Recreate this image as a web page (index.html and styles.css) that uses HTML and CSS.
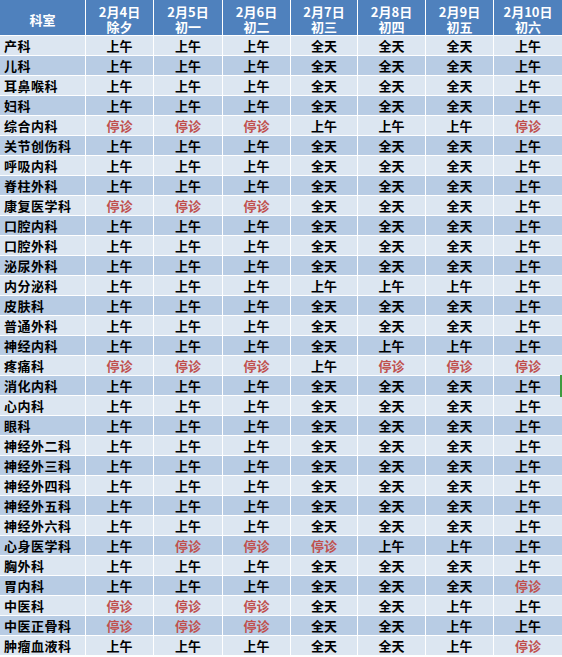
FILE: index.html
```html
<!DOCTYPE html>
<html lang="zh">
<head>
<meta charset="utf-8">
<title>春节门诊安排</title>
<link rel="stylesheet" href="styles.css">
</head>
<body>
<div class="sheet">
  <div class="row head">
    <div class="c name-h">科室</div>
    <div class="c"><span class="l">2月4日</span><span class="l">除夕</span></div>
    <div class="c"><span class="l">2月5日</span><span class="l">初一</span></div>
    <div class="c"><span class="l">2月6日</span><span class="l">初二</span></div>
    <div class="c"><span class="l">2月7日</span><span class="l">初三</span></div>
    <div class="c"><span class="l">2月8日</span><span class="l">初四</span></div>
    <div class="c"><span class="l">2月9日</span><span class="l">初五</span></div>
    <div class="c"><span class="l">2月10日</span><span class="l">初六</span></div>
  </div>
  <div class="row odd"><div class="c n">产科</div><div class="c">上午</div><div class="c">上午</div><div class="c">上午</div><div class="c">全天</div><div class="c">全天</div><div class="c">全天</div><div class="c">上午</div></div>
  <div class="row even"><div class="c n">儿科</div><div class="c">上午</div><div class="c">上午</div><div class="c">上午</div><div class="c">全天</div><div class="c">全天</div><div class="c">全天</div><div class="c">上午</div></div>
  <div class="row odd"><div class="c n">耳鼻喉科</div><div class="c">上午</div><div class="c">上午</div><div class="c">上午</div><div class="c">全天</div><div class="c">全天</div><div class="c">全天</div><div class="c">上午</div></div>
  <div class="row even"><div class="c n">妇科</div><div class="c">上午</div><div class="c">上午</div><div class="c">上午</div><div class="c">全天</div><div class="c">全天</div><div class="c">全天</div><div class="c">上午</div></div>
  <div class="row odd"><div class="c n">综合内科</div><div class="c off">停诊</div><div class="c off">停诊</div><div class="c off">停诊</div><div class="c">上午</div><div class="c">上午</div><div class="c">上午</div><div class="c off">停诊</div></div>
  <div class="row even"><div class="c n">关节创伤科</div><div class="c">上午</div><div class="c">上午</div><div class="c">上午</div><div class="c">全天</div><div class="c">全天</div><div class="c">全天</div><div class="c">上午</div></div>
  <div class="row odd"><div class="c n">呼吸内科</div><div class="c">上午</div><div class="c">上午</div><div class="c">上午</div><div class="c">全天</div><div class="c">全天</div><div class="c">全天</div><div class="c">上午</div></div>
  <div class="row even"><div class="c n">脊柱外科</div><div class="c">上午</div><div class="c">上午</div><div class="c">上午</div><div class="c">全天</div><div class="c">全天</div><div class="c">全天</div><div class="c">上午</div></div>
  <div class="row odd"><div class="c n">康复医学科</div><div class="c off">停诊</div><div class="c off">停诊</div><div class="c off">停诊</div><div class="c">全天</div><div class="c">全天</div><div class="c">全天</div><div class="c">上午</div></div>
  <div class="row even"><div class="c n">口腔内科</div><div class="c">上午</div><div class="c">上午</div><div class="c">上午</div><div class="c">全天</div><div class="c">全天</div><div class="c">全天</div><div class="c">上午</div></div>
  <div class="row odd"><div class="c n">口腔外科</div><div class="c">上午</div><div class="c">上午</div><div class="c">上午</div><div class="c">全天</div><div class="c">全天</div><div class="c">全天</div><div class="c">上午</div></div>
  <div class="row even"><div class="c n">泌尿外科</div><div class="c">上午</div><div class="c">上午</div><div class="c">上午</div><div class="c">全天</div><div class="c">全天</div><div class="c">全天</div><div class="c">上午</div></div>
  <div class="row odd"><div class="c n">内分泌科</div><div class="c">上午</div><div class="c">上午</div><div class="c">上午</div><div class="c">上午</div><div class="c">上午</div><div class="c">上午</div><div class="c">上午</div></div>
  <div class="row even"><div class="c n">皮肤科</div><div class="c">上午</div><div class="c">上午</div><div class="c">上午</div><div class="c">全天</div><div class="c">全天</div><div class="c">全天</div><div class="c">上午</div></div>
  <div class="row odd"><div class="c n">普通外科</div><div class="c">上午</div><div class="c">上午</div><div class="c">上午</div><div class="c">全天</div><div class="c">全天</div><div class="c">全天</div><div class="c">上午</div></div>
  <div class="row even"><div class="c n">神经内科</div><div class="c">上午</div><div class="c">上午</div><div class="c">上午</div><div class="c">全天</div><div class="c">上午</div><div class="c">上午</div><div class="c">上午</div></div>
  <div class="row odd"><div class="c n">疼痛科</div><div class="c off">停诊</div><div class="c off">停诊</div><div class="c off">停诊</div><div class="c">上午</div><div class="c off">停诊</div><div class="c off">停诊</div><div class="c off">停诊</div></div>
  <div class="row even"><div class="c n">消化内科</div><div class="c">上午</div><div class="c">上午</div><div class="c">上午</div><div class="c">全天</div><div class="c">全天</div><div class="c">全天</div><div class="c">上午</div></div>
  <div class="row odd"><div class="c n">心内科</div><div class="c">上午</div><div class="c">上午</div><div class="c">上午</div><div class="c">全天</div><div class="c">全天</div><div class="c">全天</div><div class="c">上午</div></div>
  <div class="row even"><div class="c n">眼科</div><div class="c">上午</div><div class="c">上午</div><div class="c">上午</div><div class="c">全天</div><div class="c">全天</div><div class="c">全天</div><div class="c">上午</div></div>
  <div class="row odd"><div class="c n">神经外二科</div><div class="c">上午</div><div class="c">上午</div><div class="c">上午</div><div class="c">全天</div><div class="c">全天</div><div class="c">全天</div><div class="c">上午</div></div>
  <div class="row even"><div class="c n">神经外三科</div><div class="c">上午</div><div class="c">上午</div><div class="c">上午</div><div class="c">全天</div><div class="c">全天</div><div class="c">全天</div><div class="c">上午</div></div>
  <div class="row odd"><div class="c n">神经外四科</div><div class="c">上午</div><div class="c">上午</div><div class="c">上午</div><div class="c">全天</div><div class="c">全天</div><div class="c">全天</div><div class="c">上午</div></div>
  <div class="row even"><div class="c n">神经外五科</div><div class="c">上午</div><div class="c">上午</div><div class="c">上午</div><div class="c">全天</div><div class="c">全天</div><div class="c">全天</div><div class="c">上午</div></div>
  <div class="row odd"><div class="c n">神经外六科</div><div class="c">上午</div><div class="c">上午</div><div class="c">上午</div><div class="c">全天</div><div class="c">全天</div><div class="c">全天</div><div class="c">上午</div></div>
  <div class="row even"><div class="c n">心身医学科</div><div class="c">上午</div><div class="c off">停诊</div><div class="c off">停诊</div><div class="c off">停诊</div><div class="c">上午</div><div class="c">上午</div><div class="c">上午</div></div>
  <div class="row odd"><div class="c n">胸外科</div><div class="c">上午</div><div class="c">上午</div><div class="c">上午</div><div class="c">全天</div><div class="c">全天</div><div class="c">全天</div><div class="c">上午</div></div>
  <div class="row even"><div class="c n">胃内科</div><div class="c">上午</div><div class="c">上午</div><div class="c">上午</div><div class="c">全天</div><div class="c">全天</div><div class="c">全天</div><div class="c off">停诊</div></div>
  <div class="row odd"><div class="c n">中医科</div><div class="c off">停诊</div><div class="c off">停诊</div><div class="c off">停诊</div><div class="c">全天</div><div class="c">全天</div><div class="c">上午</div><div class="c">上午</div></div>
  <div class="row even"><div class="c n">中医正骨科</div><div class="c off">停诊</div><div class="c off">停诊</div><div class="c off">停诊</div><div class="c">全天</div><div class="c">全天</div><div class="c">上午</div><div class="c">上午</div></div>
  <div class="row odd"><div class="c n">肿瘤血液科</div><div class="c">上午</div><div class="c">上午</div><div class="c">上午</div><div class="c">全天</div><div class="c">全天</div><div class="c">上午</div><div class="c off">停诊</div></div>
  <div class="cursor"></div>
</div>
</body>
</html>
```

FILE: styles.css
```css
html, body {
  margin: 0;
  padding: 0;
  background: #ffffff;
}
body {
  width: 562px;
  height: 657px;
  overflow: hidden;
  font-family: "Noto Sans CJK SC", "Noto Sans", sans-serif;
  font-size: 13px;
  font-weight: bold;
  color: #000;
}
.sheet {
  position: relative;
  display: flex;
  flex-direction: column;
  gap: 1px;
  background: #ffffff;
}
.row {
  display: grid;
  grid-template-columns: 85px 67px 68px 67px 66px 67px 67px 1fr;
  column-gap: 1px;
  height: 19px;
}
.head {
  height: 35px;
}
.head .c {
  background: #4f81bd;
  color: #ffffff;
  flex-direction: column;
  padding-top: 3px;
  box-sizing: border-box;
}
.head .l {
  display: block;
  height: 15px;
  line-height: 15px;
  overflow: visible;
}
.c {
  display: flex;
  align-items: center;
  justify-content: center;
  text-align: center;
  line-height: 19px;
  white-space: nowrap;
}
.odd .c {
  background: #dce6f1;
}
.even .c {
  background: #b8cce4;
}
.c.n {
  justify-content: flex-start;
  padding-left: 4px;
  letter-spacing: 0.5px;
}
.c.off {
  color: #c0504d;
}
.cursor {
  position: absolute;
  right: 0;
  top: 375px;
  width: 2px;
  height: 22px;
  background: #3f9b3f;
}
```
